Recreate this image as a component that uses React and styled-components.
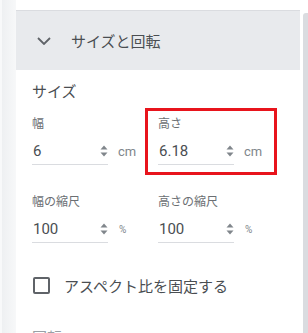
import React from 'react'
import styled, { createGlobalStyle } from 'styled-components'

const GlobalStyle = createGlobalStyle`
    body {
        margin: 0;
        background: #fff;
        font-family: "Noto Sans CJK JP", "Noto Sans", sans-serif;
    }
`

const Spinner = () => (
    <svg width="8" height="12" viewBox="0 0 8 12">
        <path d="M4 0.5 L7.5 4.5 H0.5 Z" fill="#80868b" />
        <path d="M4 11.5 L7.5 7.5 H0.5 Z" fill="#80868b" />
    </svg>
)

const Chevron = () => (
    <svg width="14" height="8" viewBox="0 0 14 8">
        <path d="M1 1 L7 7 L13 1" fill="none" stroke="#5f6368" strokeWidth="1.8" />
    </svg>
)

const fields = [
    { label: '幅', value: '6', unit: 'cm' },
    { label: '高さ', value: '6.18', unit: 'cm', highlight: true },
    { label: '幅の縮尺', value: '100', unit: '%' },
    { label: '高さの縮尺', value: '100', unit: '%' },
]

const App = () => {
    return (
        <Page>
            <GlobalStyle />
            <LeftRail />
            <Panel>
                <Header>
                    <Chevron />
                    <HeaderTitle>サイズと回転</HeaderTitle>
                </Header>
                <Body>
                    <SectionTitle>サイズ</SectionTitle>
                    <FieldGrid>
                        {fields.map((f, i) => (
                            <Field key={i} highlight={f.highlight}>
                                <Label>{f.label}</Label>
                                <InputRow>
                                    <InputBox>
                                        <Value>{f.value}</Value>
                                        <Spinner />
                                    </InputBox>
                                    <Unit small={f.unit === '%'}>{f.unit}</Unit>
                                </InputRow>
                            </Field>
                        ))}
                    </FieldGrid>
                    <CheckRow>
                        <Checkbox />
                        <CheckLabel>アスペクト比を固定する</CheckLabel>
                    </CheckRow>
                    <NextTitle>回転</NextTitle>
                </Body>
            </Panel>
            <RightRail>
                <Thumb />
            </RightRail>
        </Page>
    )
}

const Page = styled.div`
    display: flex;
    height: 333px;
    overflow: hidden;
`
const LeftRail = styled.div`
    width: 16px;
    flex-shrink: 0;
    background: linear-gradient(to right, #eef0f2, #f7f8f9);
    border-left: 2px solid #f8f9fa;
    box-sizing: border-box;
`
const Panel = styled.div`
    width: 284px;
    flex-shrink: 0;
    padding-top: 10px;
`
const Header = styled.div`
    display: flex;
    align-items: center;
    height: 60px;
    box-sizing: border-box;
    padding-left: 21px;
    background: #e8eaed;
    border-top: 1px solid #dadce0;
`
const HeaderTitle = styled.span`
    margin-left: 20px;
    font-size: 15px;
    color: #4a4e52;
`
const Body = styled.div`
    padding: 11px 16px 0;
`
const SectionTitle = styled.div`
    font-size: 15px;
    line-height: 20px;
    color: #4a4e52;
`
const FieldGrid = styled.div`
    display: grid;
    grid-template-columns: 126px 126px;
    row-gap: 28px;
    margin-top: 14px;
`
const Field = styled.div`
    position: relative;
    &::after {
        content: '';
        display: ${p => (p.highlight ? 'block' : 'none')};
        position: absolute;
        left: -13px;
        top: -7px;
        width: 132px;
        height: 67px;
        box-sizing: border-box;
        border: 3px solid #e8141c;
    }
`
const Label = styled.div`
    font-size: 12px;
    line-height: 16px;
    color: #6b6f73;
`
const InputRow = styled.div`
    display: flex;
    align-items: center;
    margin-top: 6px;
`
const InputBox = styled.div`
    display: flex;
    align-items: center;
    justify-content: space-between;
    width: 75px;
    height: 27px;
    border-bottom: 1px solid #dadce0;
    padding-left: 1px;
    box-sizing: content-box;
`
const Value = styled.span`
    font-family: Roboto, "Noto Sans", sans-serif;
    font-size: 15px;
    color: #4a4e52;
`
const Unit = styled.span`
    margin-left: ${p => (p.small ? '11px' : '10px')};
    font-family: Roboto, "Noto Sans", sans-serif;
    font-size: ${p => (p.small ? '10px' : '13px')};
    color: #80868b;
`
const CheckRow = styled.div`
    display: flex;
    align-items: center;
    margin-top: 32px;
`
const Checkbox = styled.span`
    width: 17px;
    height: 17px;
    box-sizing: border-box;
    border: 2px solid #5f6368;
    border-radius: 2px;
    margin-left: 1px;
`
const CheckLabel = styled.span`
    margin-left: 14px;
    font-size: 15px;
    color: #4a4e52;
`
const NextTitle = styled.div`
    margin-top: 30px;
    font-size: 15px;
    color: #9aa0a6;
`
const RightRail = styled.div`
    flex: 1;
    padding-top: 13px;
    padding-left: 3px;
`
const Thumb = styled.div`
    height: 100%;
    background: #dadce0;
    border-top-left-radius: 3px;
`

export default App
